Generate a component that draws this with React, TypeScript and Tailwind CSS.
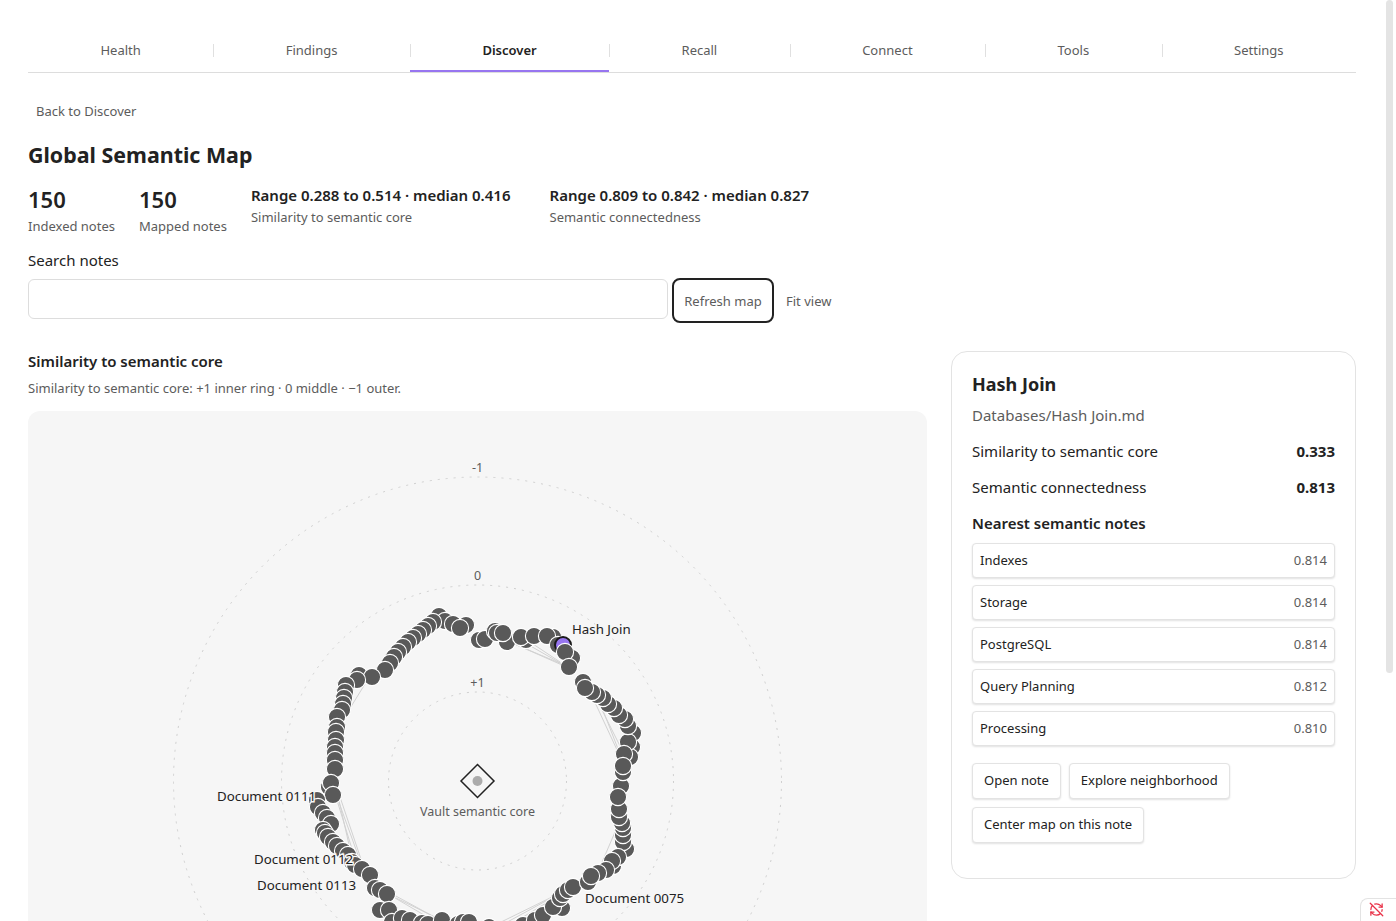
import { RefreshCwOff } from "lucide-react";

const TABS = ["Health", "Findings", "Discover", "Recall", "Connect", "Tools", "Settings"];

const NEAREST = [
  { name: "Indexes", score: "0.814" },
  { name: "Storage", score: "0.814" },
  { name: "PostgreSQL", score: "0.814" },
  { name: "Query Planning", score: "0.812" },
  { name: "Processing", score: "0.810" },
];

// node centres in page pixels, in paint order (later ones sit on top)
const NODES_BEFORE: [number, number][] = [
  [439, 616], [445, 621], [433, 622], [428, 626], [423, 630], [453, 624], [466, 625], [460, 628],
  [418, 634], [413, 638], [408, 642], [403, 647], [398, 652], [394, 657], [390, 663], [385, 670],
  [359, 675], [372, 677], [357, 680],
  [346, 685], [345, 692], [344, 698], [343, 704], [342, 710], [337, 717], [337, 727], [336, 732],
  [336, 740], [335, 747], [335, 753], [335, 760], [335, 769],
  [329, 787], [331, 783], [333, 795],
  [317, 800], [318, 807], [323, 813], [327, 818], [331, 824],
  [323, 830], [325, 833], [328, 837], [333, 842], [337, 846], [343, 851], [348, 855],
  [352, 862], [355, 865], [362, 869], [370, 875],
  [375, 888], [380, 890], [387, 894], [380, 910], [389, 910],
  [392, 922], [402, 918], [410, 920], [422, 923], [428, 924], [442, 920], [458, 924], [463, 922], [469, 922], [489, 927],
  [523, 925], [535, 920], [543, 915], [562, 908], [553, 907], [560, 898], [563, 894], [568, 890], [573, 887],
  [626, 849], [623, 842], [623, 835], [623, 828], [622, 823], [619, 817], [619, 809], [621, 786], [618, 797], [623, 772],
  [613, 866], [618, 857], [612, 861], [606, 870], [598, 873], [588, 882], [591, 876],
  [632, 747], [630, 757], [633, 733], [628, 742], [624, 754], [623, 766],
  [479, 640], [485, 639], [495, 631], [507, 642], [497, 633], [503, 633], [526, 640], [521, 637], [534, 636], [553, 637], [547, 636], [558, 645],
];

const NODES_AFTER: [number, number][] = [
  [572, 658], [565, 652], [569, 667],
  [628, 726], [625, 719], [619, 715], [614, 708], [608, 704], [603, 698], [597, 695], [592, 692],
  [583, 682], [585, 688],
];

const EDGES: [number, number, number, number][] = [
  [562, 664, 500, 638], [562, 665, 510, 642], [562, 664, 520, 640], [560, 662, 530, 642],
  [592, 696, 618, 752], [596, 698, 622, 750], [599, 700, 620, 754],
  [337, 797, 362, 866], [336, 797, 356, 862], [338, 796, 352, 858], [340, 797, 364, 868],
  [394, 897, 445, 922], [394, 895, 440, 920], [395, 898, 436, 922],
  [555, 896, 500, 926], [552, 897, 495, 925], [556, 897, 510, 925],
  [615, 832, 600, 867], [365, 684, 344, 718], [416, 632, 440, 628],
];

const LABELS = [
  { x: 572, y: 634, text: "Hash Join" },
  { x: 217, y: 801, text: "Document 0111" },
  { x: 254, y: 864, text: "Document 0112" },
  { x: 257, y: 890, text: "Document 0113" },
  { x: 585, y: 903, text: "Document 0075" },
];

function SemanticMap() {
  return (
    <svg viewBox="0 0 899 740" className="block h-[740px] w-full font-['Noto_Sans',sans-serif]">
      <g transform="translate(-28 -411)">
        {[89, 196, 304].map((r) => (
          <circle key={r} cx={477.5} cy={781} r={r} fill="none" stroke="#cfcfcf" strokeWidth={1} strokeDasharray="2 6" />
        ))}
        <g fontSize={12.5} fill="#5c5c5c" textAnchor="middle">
          <text x={477.5} y={472}>-1</text>
          <text x={477.5} y={580}>0</text>
          <text x={477.5} y={687}>+1</text>
          <text x={477.5} y={816}>Vault semantic core</text>
        </g>
        <path d="M477.5 764.5 L494 781 L477.5 797.5 L461 781 Z" fill="none" stroke="#222222" strokeWidth={1.5} />
        <circle cx={477.5} cy={781} r={5} fill="#ababab" />
        {EDGES.map(([x1, y1, x2, y2], i) => (
          <line key={i} x1={x1} y1={y1} x2={x2} y2={y2} stroke="#d2d2d2" strokeWidth={1} />
        ))}
        {NODES_BEFORE.map(([cx, cy], i) => (
          <circle key={i} cx={cx} cy={cy} r={8.6} fill="#595959" stroke="#ffffff" strokeWidth={1.1} />
        ))}
        <circle cx={563} cy={645} r={8} fill="#9775f0" stroke="#1a1a1a" strokeWidth={2} />
        {NODES_AFTER.map(([cx, cy], i) => (
          <circle key={i} cx={cx} cy={cy} r={8.6} fill="#595959" stroke="#ffffff" strokeWidth={1.1} />
        ))}
        {LABELS.map((l) => (
          <text
            key={l.text}
            x={l.x}
            y={l.y}
            fontSize={13.3}
            fill="#222222"
            stroke="#f6f6f6"
            strokeWidth={3}
            paintOrder="stroke"
          >
            {l.text}
          </text>
        ))}
      </g>
    </svg>
  );
}

export default function App() {
  return (
    <div className="relative h-[921px] overflow-hidden bg-white font-['Noto_Sans',sans-serif] text-[#222222]">
      <div className="w-[1384px] px-7 pt-7">
        <nav className="flex h-[45px] border-b border-[#dddddd]">
          {TABS.map((tab, i) => (
            <div
              key={tab}
              className={
                tab === "Discover"
                  ? "relative flex flex-auto items-center justify-center border-b-2 border-[#9775f0] pt-[3px] text-[13px] font-semibold"
                  : "relative flex flex-auto items-center justify-center pt-[1px] text-[13px] text-[#5c5c5c]"
              }
            >
              {tab}
              {i < TABS.length - 1 && <span className="absolute top-[16px] -right-px h-[13px] w-px bg-[#e0e0e0]" />}
            </div>
          ))}
        </nav>

        <div className="mt-[27px] px-2 text-[13px] leading-[22px] text-[#5c5c5c]">Back to Discover</div>

        <h1 className="mt-[18px] text-[21.4px] leading-[30px] font-bold">Global Semantic Map</h1>

        <div className="mt-[14px] flex items-start">
          <div className="mr-6">
            <div className="text-[22px] leading-[30px] font-semibold">150</div>
            <div className="mt-[2px] text-[13px] leading-[20px] text-[#5c5c5c]">Indexed notes</div>
          </div>
          <div className="mr-6">
            <div className="text-[22px] leading-[30px] font-semibold">150</div>
            <div className="mt-[2px] text-[13px] leading-[20px] text-[#5c5c5c]">Mapped notes</div>
          </div>
          <div className="mr-[39px]">
            <div className="text-[15px] leading-[22px] font-semibold">Range 0.288 to 0.514 · median 0.416</div>
            <div className="mt-[1px] text-[13px] leading-[20px] text-[#5c5c5c]">Similarity to semantic core</div>
          </div>
          <div>
            <div className="text-[15px] leading-[22px] font-semibold">Range 0.809 to 0.842 · median 0.827</div>
            <div className="mt-[1px] text-[13px] leading-[20px] text-[#5c5c5c]">Semantic connectedness</div>
          </div>
        </div>

        <div className="mt-[13px] text-[15px] leading-[22px]">Search notes</div>

        <div className="mt-[8px] flex items-start">
          <input className="h-10 w-[640px] rounded-md border border-[#dddddd] bg-white" />
          <button className="-mt-px ml-1 h-[45px] w-[102px] rounded-lg border-2 border-[#222222] pt-[3px] text-[13px] text-[#5c5c5c]">
            Refresh map
          </button>
          <button className="-mt-px ml-3 h-[45px] pt-[3px] text-[13px] text-[#5c5c5c]">Fit view</button>
        </div>

        <div className="mt-[27px] flex items-start gap-6">
          <div className="w-[899px] shrink-0">
            <h2 className="text-[15px] leading-[22px] font-semibold">Similarity to semantic core</h2>
            <p className="mt-[6px] text-[13px] leading-[20px] text-[#5c5c5c]">
              Similarity to semantic core: +1 inner ring · 0 middle · −1 outer.
            </p>
            <div className="mt-[13px] overflow-hidden rounded-xl bg-[#f6f6f6]">
              <SemanticMap />
            </div>
          </div>

          <aside className="mt-px h-[528px] w-[405px] shrink-0 rounded-2xl border border-[#e3e3e3] px-[20px] pt-[20px]">
            <h3 className="text-[18px] leading-[25px] font-bold">Hash Join</h3>
            <div className="mt-[7px] text-[15px] leading-[22px] text-[#5c5c5c]">Databases/Hash Join.md</div>
            <div className="mt-[14px] flex justify-between text-[15px] leading-[22px]">
              <span>Similarity to semantic core</span>
              <span className="font-bold">0.333</span>
            </div>
            <div className="mt-[14px] flex justify-between text-[15px] leading-[22px]">
              <span>Semantic connectedness</span>
              <span className="font-bold">0.813</span>
            </div>
            <div className="mt-[14px] text-[15px] leading-[22px] font-semibold">Nearest semantic notes</div>
            <ul className="mt-[9px] flex flex-col gap-[7px]">
              {NEAREST.map((note) => (
                <li
                  key={note.name}
                  className="flex h-[35px] items-center justify-between rounded-[4px] border border-[#e3e3e3] bg-white px-[7px] text-[13px] shadow-[0_1px_2px_rgba(0,0,0,0.12)]"
                >
                  <span>{note.name}</span>
                  <span className="text-[#5c5c5c]">{note.score}</span>
                </li>
              ))}
            </ul>
            <div className="mt-[17px] flex flex-wrap gap-2">
              {["Open note", "Explore neighborhood", "Center map on this note"].map((label) => (
                <button
                  key={label}
                  className="h-[36px] rounded-[4px] border border-[#e3e3e3] bg-white px-[11px] text-[13px] shadow-[0_1px_2px_rgba(0,0,0,0.12)]"
                >
                  {label}
                </button>
              ))}
            </div>
          </aside>
        </div>
      </div>

      <div className="absolute top-0 right-[3px] h-[673px] w-[7px] rounded-full bg-[#e4e4e4]" />
      <div className="absolute top-[898px] right-0 flex h-[23px] w-[36px] justify-center rounded-tl-lg border-t border-l border-[#e3e3e3] bg-white pt-[3px] pr-[4px] text-[#e93147]">
        <RefreshCwOff size={15} />
      </div>
    </div>
  );
}
